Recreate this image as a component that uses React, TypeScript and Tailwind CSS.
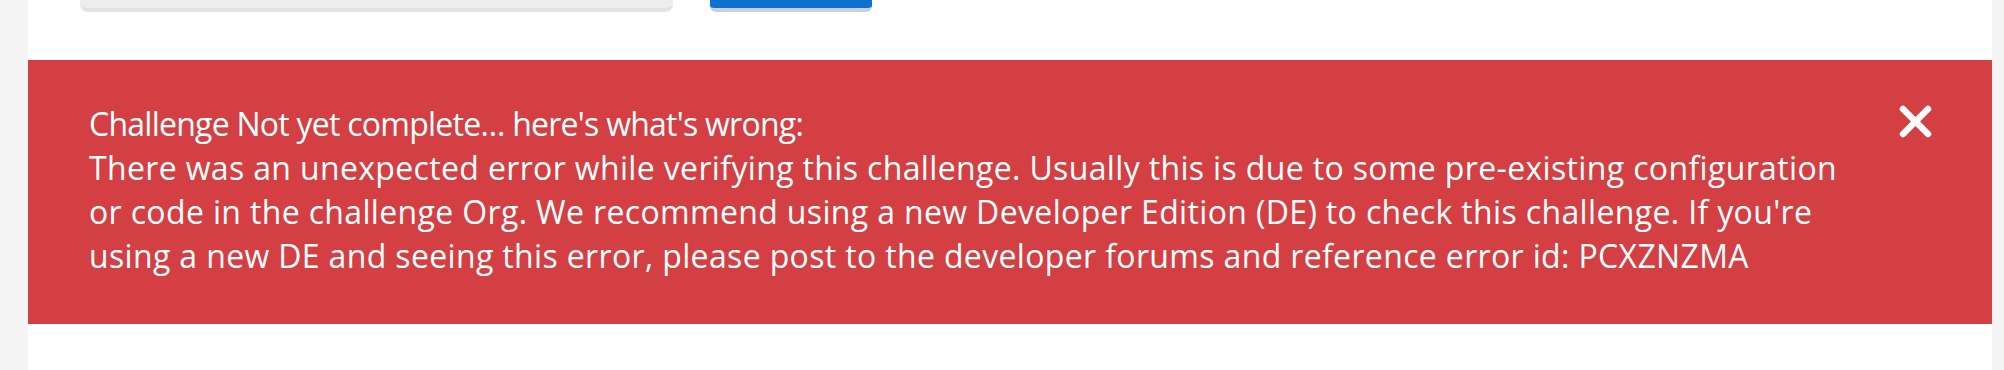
export default function App() {
  return (
    <div className="flex h-[370px] w-full bg-[#f4f4f4]">
      <div className="w-[28px] shrink-0" />

      <div className="flex flex-1 flex-col bg-white">
        {/* Bottom edge of the form row that scrolled out of view */}
        <div className="flex h-[60px] items-start gap-[37px] pl-[52px]">
          <div className="h-[12px] w-[593px] rounded-b-[8px] border-b-[4px] border-[#e1e2e3] bg-[#ecedee]" />
          <div className="h-[12px] w-[162px] rounded-b-[6px] border-b-[4px] border-[#c8d0da] bg-[#1070d0]" />
        </div>

        {/* Error toast */}
        <div
          className="flex h-[264px] items-start justify-between bg-[#d33f42] pl-[61px] pr-[60px] pt-[42px] text-white"
          style={{ fontFamily: '"Open Sans", Lato, sans-serif' }}
        >
          <div className="text-[32px] leading-[44px] tracking-[0.35px] whitespace-nowrap">
            <div className="tracking-[-0.75px]">Challenge Not yet complete… here's what's wrong:</div>
            <div>
              There was an unexpected error while verifying this challenge. Usually this is due to some pre-existing configuration
            </div>
            <div>
              or code in the challenge Org. We recommend using a new Developer Edition (DE) to check this challenge. If you're
            </div>
            <div>
              using a new DE and seeing this error, please post to the developer forums and reference error id: PCXZNZMA
            </div>
          </div>
          <button className="mt-[3px] h-[33px] w-[33px] shrink-0" aria-label="Close">
            <svg viewBox="0 0 33 33" className="h-[33px] w-[33px]">
              <path d="M4 4 L29 29 M29 4 L4 29" stroke="white" strokeWidth="6.5" strokeLinecap="round" fill="none" />
            </svg>
          </button>
        </div>

        <div className="flex-1" />
      </div>

      <div className="w-[12px] shrink-0" />
    </div>
  );
}
